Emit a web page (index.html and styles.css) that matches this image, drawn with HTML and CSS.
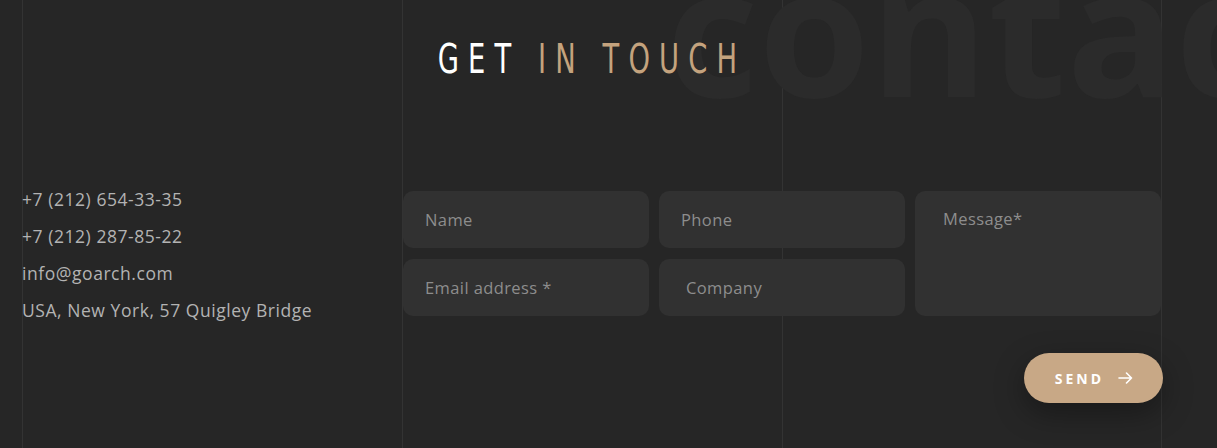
FILE: index.html
```html
<!DOCTYPE html>
<html lang="en">
<head>
<meta charset="utf-8">
<title>Get in touch</title>
<link rel="stylesheet" href="styles.css">
</head>
<body>
<section class="contact">
  <div class="grid-lines" aria-hidden="true"><span></span><span></span><span></span></div>
  <div class="bg-word" aria-hidden="true">contact</div>
  <div class="container">
    <h2 class="title"><span class="title-text">GET <span class="accent">IN TOUCH</span></span></h2>
    <div class="content">
      <ul class="info">
        <li>+7 (212) 654-33-35</li>
        <li>+7 (212) 287-85-22</li>
        <li>info@goarch.com</li>
        <li>USA, New York, 57 Quigley Bridge</li>
      </ul>
      <div class="fields">
        <input class="field" type="text" placeholder="Name">
        <input class="field" type="text" placeholder="Phone">
        <textarea class="field message" placeholder="Message*"></textarea>
        <input class="field" type="email" placeholder="Email address *">
        <input class="field company" type="text" placeholder="Company">
      </div>
      <div class="actions">
        <button class="send" type="button">SEND
          <svg width="15" height="12" viewBox="0 0 15 12" fill="none" stroke="#fff" stroke-width="1.6" stroke-linecap="round" stroke-linejoin="round"><path d="M1 6h12.5M8.5 1l5 5-5 5"/></svg>
        </button>
      </div>
    </div>
  </div>
</section>
</body>
</html>
```

FILE: styles.css
```css
* { box-sizing: border-box; }
html, body { margin: 0; padding: 0; }
body {
  background: #262626;
  font-family: "Open Sans", "DejaVu Sans", sans-serif;
  height: 448px;
  overflow: hidden;
}
.contact {
  position: relative;
  height: 448px;
  overflow: hidden;
}
.grid-lines {
  position: absolute;
  top: 0;
  bottom: 0;
  left: 22px;
  width: 1140px;
  display: grid;
  grid-template-columns: repeat(3, 1fr);
  z-index: 0;
}
.grid-lines span { border-left: 1px solid #333333; }
.grid-lines span:last-child { border-right: 1px solid #333333; }
.bg-word {
  position: absolute;
  left: 666px;
  top: -62px;
  font-family: "Open Sans", sans-serif;
  font-weight: 700;
  font-size: 180px;
  line-height: 1;
  color: #2b2b2b;
  letter-spacing: 0;
  white-space: nowrap;
  z-index: 0;
}
.container {
  position: relative;
  z-index: 1;
  margin-left: 22px;
  width: 1140px;
  padding-top: 36px;
}
.title {
  margin: 0;
  text-align: center;
  font-family: "Liberation Sans Narrow", "DejaVu Sans Condensed", sans-serif;
  font-weight: 400;
  font-size: 40px;
  line-height: 46px;
  letter-spacing: 0.3em;
  color: #ffffff;
  white-space: nowrap;
}
.title-text {
  display: inline-block;
  transform: scaleX(0.76);
  transform-origin: center;
}
.title .accent { color: #c4a37e; }
.content {
  display: grid;
  grid-template-columns: 381px 1fr;
  align-items: center;
  row-gap: 24px;
  margin-top: 95px;
}
.info {
  list-style: none;
  margin: 4px 0 0;
  padding: 0;
  color: #b3b3b3;
  font-size: 17.5px;
  letter-spacing: 0.55px;
  line-height: 37px;
}
.fields {
  display: grid;
  grid-template-columns: repeat(3, 1fr);
  grid-template-rows: 57px 57px;
  column-gap: 10px;
  row-gap: 11px;
  width: 758px;
}
.field {
  background: #313131;
  border: none;
  border-radius: 10px;
  outline: none;
  font-family: "Open Sans", "DejaVu Sans", sans-serif;
  font-size: 16.5px;
  letter-spacing: 0.4px;
  color: #d0d0d0;
  padding: 0 22px;
  height: 57px;
  width: 100%;
}
.field::placeholder { color: #8d8d8d; }
.field.company { padding-left: 27px; }
.field.message {
  grid-column: 3;
  grid-row: 1 / span 2;
  height: 100%;
  resize: none;
  padding: 16px 28px;
  line-height: 24px;
}
.actions {
  grid-column: 2;
  display: flex;
  justify-content: flex-end;
}
.send {
  display: flex;
  align-items: center;
  gap: 14px;
  height: 50px;
  padding: 0 30px 0 31px;
  margin-right: -1px;
  border: none;
  border-radius: 25px;
  background: #c8a886;
  color: #ffffff;
  font-family: "Open Sans", "DejaVu Sans", sans-serif;
  font-weight: 700;
  font-size: 14px;
  letter-spacing: 3px;
  box-shadow: 0 10px 30px rgba(0, 0, 0, 0.35);
  cursor: pointer;
}
```
